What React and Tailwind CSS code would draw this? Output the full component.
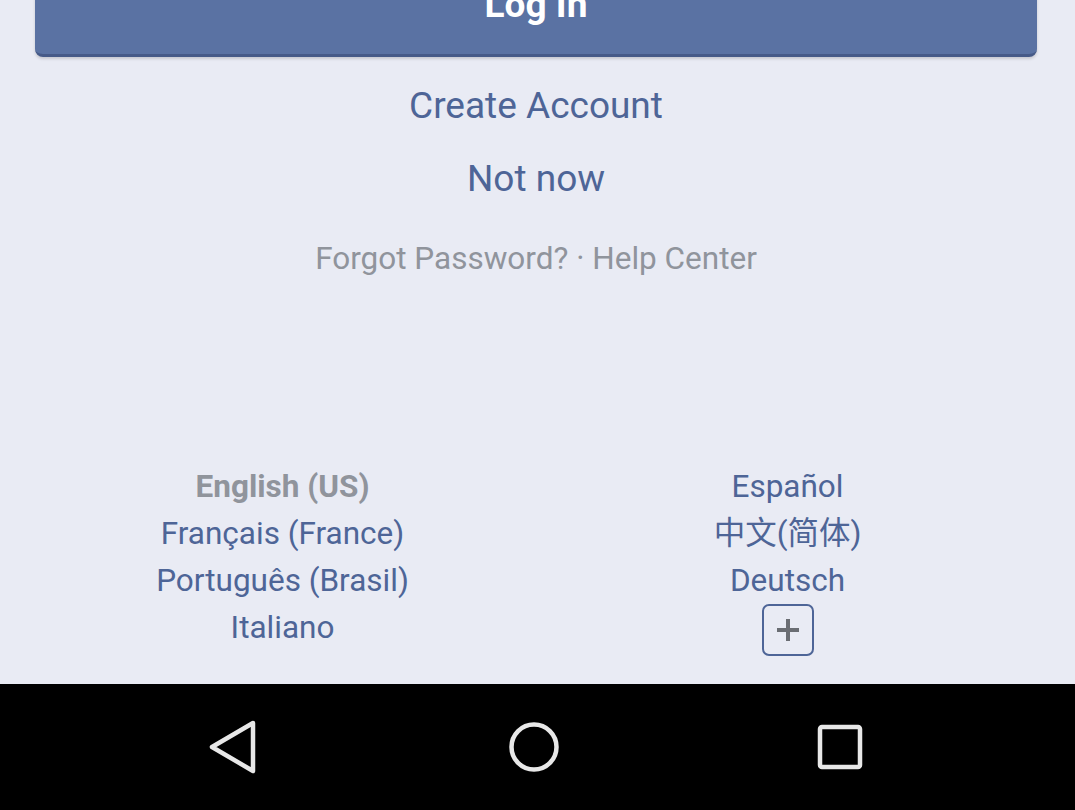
import React from 'react';

const leftLangs = ['Français (France)', 'Português (Brasil)', 'Italiano'];
const rightLangs = ['Español', '中文(简体)', 'Deutsch'];

function NavBar() {
  return (
    <div className="h-[126px] bg-black flex items-center pl-[205px] gap-[250px]">
      <svg width="52" height="54" viewBox="0 0 52 54">
        <path d="M48 3 L7 27 L48 51 Z" fill="none" stroke="#e8e8e8" strokeWidth="4.5" strokeLinejoin="round" />
      </svg>
      <svg width="54" height="54" viewBox="0 0 54 54">
        <circle cx="27" cy="27" r="22.5" fill="none" stroke="#e8e8e8" strokeWidth="4.5" />
      </svg>
      <svg width="48" height="48" viewBox="0 0 48 48" className="ml-[5px]">
        <rect x="4" y="4" width="40" height="40" rx="2" fill="none" stroke="#e8e8e8" strokeWidth="4.5" />
      </svg>
    </div>
  );
}

export default function App() {
  return (
    <div className="h-[810px] flex flex-col bg-[#e9ebf4]" style={{ fontFamily: 'Roboto, "Noto Sans CJK SC", sans-serif' }}>
      <div className="flex-1 overflow-hidden pl-[35px] pr-[38px]">
        {/* log in button, scrolled partly off the top */}
        <button className="-mt-[44px] w-full h-[101px] rounded-[8px] bg-[#5a72a3] border-b-[3px] border-[#465a88] shadow-[0_2px_3px_rgba(0,0,0,0.15)] flex items-end justify-center pb-[31px] text-white text-[37px] font-bold leading-none">
          Log In
        </button>

        <div className="flex flex-col items-center">
          <div className="mt-[28px] text-[37px] leading-[42px] text-[#4e6597]">Create Account</div>
          <div className="mt-[31px] text-[37px] leading-[42px] text-[#4e6597]">Not now</div>
          <div className="mt-[40px] text-[31.5px] leading-[38px] text-[#90949c]">Forgot Password? · Help Center</div>
        </div>

        <div className="mt-[185px] grid grid-cols-2 text-[31.5px] leading-[47px] text-[#4e6597] text-center">
          <div className="flex flex-col items-center pr-[6px]">
            <div className="font-bold text-[#90949c]">English (US)</div>
            {leftLangs.map((l) => (
              <div key={l}>{l}</div>
            ))}
          </div>
          <div className="flex flex-col items-center pl-[2px]">
            {rightLangs.map((l) => (
              <div key={l}>{l}</div>
            ))}
            <div className="h-[47px] flex items-center pt-[5px]">
              <div className="w-[52px] h-[52px] border-[2px] border-[#4e6597] rounded-[7px] flex items-center justify-center">
                <svg width="28" height="28" viewBox="0 0 28 28">
                  <path d="M14 3 V25 M3 14 H25" stroke="#6a6d73" strokeWidth="4" />
                </svg>
              </div>
            </div>
          </div>
        </div>
        <div className="mt-[31px] text-center text-[22px] text-[#90949c]">Facebook Inc.</div>
      </div>
      <NavBar />
    </div>
  );
}
